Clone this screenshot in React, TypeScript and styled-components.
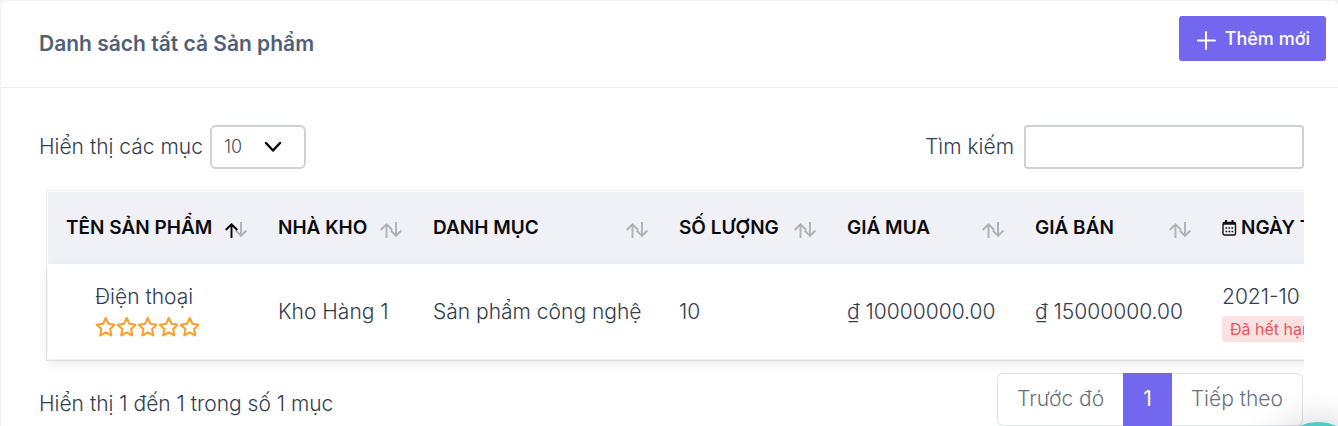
import React from "react";
import styled, { createGlobalStyle } from "styled-components";

const GlobalStyle = createGlobalStyle`
  *, *::before, *::after { box-sizing: border-box; }
  body {
    margin: 0;
    background: #f1f1f8;
    color: #323c4e;
    font-family: Inter, "Noto Sans", sans-serif;
    font-size: 21px;
    font-weight: 300;
    line-height: 30px;
    overflow: hidden;
  }
  button, input, select { font: inherit; margin: 0; }
`;

const Card = styled.main`
  margin: 1px 0 0 1px;
  min-height: calc(100vh - 1px);
  background: #fff;
  border-radius: 6px 6px 0 0;
`;

const CardHeader = styled.header`
  display: flex;
  justify-content: space-between;
  align-items: flex-start;
  height: 87px;
  padding: 15px 12px 0 38px;
  border-bottom: 1px solid #ececf1;
`;

const Title = styled.h1`
  margin: 13px 0 0;
  color: #515f76;
  font-size: 21px;
  line-height: 30px;
  font-weight: 600;
`;

const AddButton = styled.button`
  display: flex;
  align-items: center;
  gap: 9px;
  height: 45px;
  padding: 0 16px 0 17px;
  border: 0;
  border-radius: 3px;
  background: #7367f0;
  color: #fff;
  font-size: 18px;
  font-weight: 500;
  line-height: 44px;
  svg { margin-top: 2px; }
`;

const CardBody = styled.div`
  padding: 37px 34px 0 38px;
`;

const Toolbar = styled.div`
  display: flex;
  justify-content: space-between;
`;

const Field = styled.label<{ $gap: number }>`
  display: flex;
  align-items: center;
  gap: ${(p) => p.$gap}px;
`;

const SelectWrap = styled.span`
  display: grid;
  align-items: center;
  > * { grid-area: 1 / 1; }
  svg { justify-self: end; margin-right: 24px; pointer-events: none; }
`;

const LengthSelect = styled.select`
  appearance: none;
  width: 96px;
  height: 44px;
  padding: 0 12px;
  border: 2px solid #ced2d8;
  border-radius: 6px;
  background: #fff;
  color: #4a5262;
  font-size: 18px;
`;

const SearchInput = styled.input`
  width: 280px;
  height: 44px;
  padding: 0 12px;
  border: 2px solid #ced2d8;
  border-radius: 4px;
  background: #fff;
`;

const TableScroll = styled.div`
  overflow: hidden;
  margin-top: 21px;
  padding: 0 0 12px 7px;
`;

const TableFrame = styled.div`
  width: 1540px;
  padding: 1px;
  border: 1px solid #ebebeb;
`;

const Table = styled.table`
  width: 100%;
  table-layout: fixed;
  border-collapse: collapse;
`;

const HeadCell = styled.th`
  height: 72px;
  padding: 0 0 0 18px;
  background: #f0f1f7;
  color: #0b0b0d;
  font-size: 19px;
  font-weight: 600;
  text-align: left;
  text-transform: uppercase;
  white-space: nowrap;
`;

const HeadInner = styled.span`
  display: flex;
  justify-content: space-between;
  align-items: center;
  padding-right: 12px;
  > svg { margin-top: 4px; }
`;

const HeadLabel = styled.span`
  display: flex;
  align-items: center;
  gap: 4px;
`;

const BodyRow = styled.tr`
  border-radius: 6px;
  background: #fff;
  box-shadow: 0 4px 12px rgba(30, 30, 40, 0.1);
`;

const Cell = styled.td<{ $indent?: boolean }>`
  height: 95px;
  padding: 0 0 0 ${(p) => (p.$indent ? 47 : 18)}px;
  white-space: nowrap;
`;

const Stars = styled.span`
  display: flex;
  gap: 1px;
  height: 30px;
  align-items: center;
`;

const Badge = styled.span`
  display: block;
  width: max-content;
  margin-top: 4px;
  padding: 0 8px;
  border-radius: 4px;
  background: #fce1e2;
  color: #ea5455;
  font-size: 16px;
  font-weight: 400;
  line-height: 26px;
`;

const Footer = styled.div`
  display: flex;
  justify-content: space-between;
  align-items: flex-start;
`;

const Info = styled.p`
  margin: 16px 0 0;
`;

const Pager = styled.nav`
  display: flex;
  margin-right: 1px;
`;

const PageButton = styled.button<{ $active?: boolean; $side?: "left" | "right" }>`
  height: 53px;
  padding: 0 19px 2px;
  border: 1px solid ${(p) => (p.$active ? "#7367f0" : "#dfe2e6")};
  border-left-width: ${(p) => (p.$side === "right" ? 0 : 1)}px;
  border-right-width: ${(p) => (p.$side === "left" ? 0 : 1)}px;
  border-radius: ${(p) =>
    p.$side === "left" ? "6px 0 0 6px" : p.$side === "right" ? "0 6px 6px 0" : "0"};
  background: ${(p) => (p.$active ? "#7367f0" : "#fff")};
  color: ${(p) => (p.$active ? "#fff" : "#69727d")};
  font-weight: ${(p) => (p.$active ? 400 : 300)};
`;

const ChatButton = styled.button`
  position: fixed;
  right: -24px;
  bottom: -84px;
  width: 88px;
  height: 88px;
  border: 0;
  border-radius: 50%;
  background: #4ecac7;
  box-shadow: 0 4px 40px rgba(0, 0, 0, 0.24);
`;

const PlusIcon = () => (
  <svg width="20" height="20" viewBox="0 0 20 20" fill="none" stroke="#fff" strokeWidth="2" strokeLinecap="round" aria-hidden="true">
    <path d="M10 2v17M2 10.500h17" />
  </svg>
);

const ChevronIcon = () => (
  <svg width="18" height="12" viewBox="0 0 18 12" fill="none" stroke="#000" strokeWidth="2.400" strokeLinecap="round" strokeLinejoin="round" aria-hidden="true">
    <path d="M2 2l7 7.500L16 2" />
  </svg>
);

const SortIcon = ({ ascending = false }: { ascending?: boolean }) => (
  <svg width="24" height="18" viewBox="0 0 24 18" fill="none" strokeWidth="1.900" aria-hidden="true">
    <path d="M17 1v13.800M11.800 9.500l5.200 5.300l5.400-5.300" stroke="#b0b1b5" />
    <path d="M7.500 17V3.300M1.700 9L7.500 3.300L13.300 9" stroke={ascending ? "#000" : "#b0b1b5"} />
  </svg>
);

const CalendarIcon = () => (
  <svg width="15" height="16" viewBox="0 0 15 16" aria-hidden="true">
    <rect x="1" y="2.500" width="12.500" height="12.500" rx="1.500" fill="none" stroke="#111" strokeWidth="1.400" />
    <path d="M1 2.500h12.500v2.300H1zM3 0h2v3H3zM9.500 0h2v3h-2z" fill="#111" />
    <path d="M3.500 8h8M3.500 11.500h8" stroke="#111" strokeWidth="1.700" strokeDasharray="1.700 1.300" />
  </svg>
);

const StarIcon = () => (
  <svg width="20" height="20" viewBox="-1 0.500 19 19" fill="none" stroke="#ff9f2a" strokeWidth="2" strokeLinejoin="round" aria-hidden="true">
    <path d="M9.200 1.500l2.500 5.400l6 .9l-4.300 4.200l1 6L9.200 15.200l-5.200 2.800l1-6l-4.300-4.200l6-.9z" />
  </svg>
);

const columns = [
  { label: "Tên sản phẩm", width: 212, ascending: true },
  { label: "Nhà kho", width: 155 },
  { label: "Danh mục", width: 246 },
  { label: "Số lượng", width: 168 },
  { label: "Giá mua", width: 188 },
  { label: "Giá bán", width: 187 },
  { label: "Ngày tạo", width: 380, calendar: true },
];

export default function App() {
  return (
    <>
      <GlobalStyle />
      <Card>
        <CardHeader>
          <Title>Danh sách tất cả Sản phẩm</Title>
          <AddButton type="button">
            <PlusIcon />
            Thêm mới
          </AddButton>
        </CardHeader>
        <CardBody>
          <Toolbar>
            <Field $gap={7}>
              Hiển thị các mục
              <SelectWrap>
                <LengthSelect defaultValue="10">
                  <option>10</option>
                  <option>25</option>
                  <option>50</option>
                </LengthSelect>
                <ChevronIcon />
              </SelectWrap>
            </Field>
            <Field $gap={10}>
              Tìm kiếm
              <SearchInput type="search" />
            </Field>
          </Toolbar>
          <TableScroll>
            <TableFrame>
              <Table>
                <colgroup>
                  {columns.map((c) => (
                    <col key={c.label} width={c.width} />
                  ))}
                </colgroup>
                <thead>
                  <tr>
                    {columns.map((c) => (
                      <HeadCell key={c.label} scope="col">
                        <HeadInner>
                          <HeadLabel>
                            {c.calendar && <CalendarIcon />}
                            {c.label}
                          </HeadLabel>
                          <SortIcon ascending={c.ascending} />
                        </HeadInner>
                      </HeadCell>
                    ))}
                  </tr>
                </thead>
                <tbody>
                  <BodyRow>
                    <Cell $indent>
                      Điện thoại
                      <Stars role="img" aria-label="0 / 5">
                        {[1, 2, 3, 4, 5].map((n) => (
                          <StarIcon key={n} />
                        ))}
                      </Stars>
                    </Cell>
                    <Cell>Kho Hàng 1</Cell>
                    <Cell>Sản phẩm công nghệ</Cell>
                    <Cell>10</Cell>
                    <Cell>₫ 10000000.00</Cell>
                    <Cell>₫ 15000000.00</Cell>
                    <Cell>
                      2021-10
                      <Badge>Đã hết hạn</Badge>
                    </Cell>
                  </BodyRow>
                </tbody>
              </Table>
            </TableFrame>
          </TableScroll>
          <Footer>
            <Info>Hiển thị 1 đến 1 trong số 1 mục</Info>
            <Pager aria-label="Phân trang">
              <PageButton type="button" $side="left">Trước đó</PageButton>
              <PageButton type="button" $active aria-current="page">1</PageButton>
              <PageButton type="button" $side="right">Tiếp theo</PageButton>
            </Pager>
          </Footer>
        </CardBody>
      </Card>
      <ChatButton type="button" aria-label="Chat" />
    </>
  );
}
